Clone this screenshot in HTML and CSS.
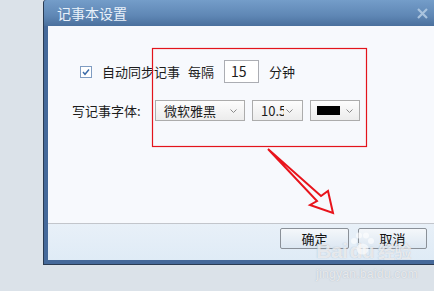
FILE: index.html
```html
<!DOCTYPE html>
<html lang="zh-CN">
	<head>
		<meta charset="UTF-8" />
		<title>记事本设置</title>
		<link rel="stylesheet" href="styles.css">
	</head>
	<body>
		<div class="dialog">
			<div class="titlebar">
				<span class="title">记事本设置</span>
				<svg class="close" width="11" height="11" viewBox="0 0 11 11">
					<path d="M1 1 L10 10 M10 1 L1 10" stroke="#a9c3de" stroke-width="2.2" />
				</svg>
			</div>
			<div class="panel">
				<div class="main">
					<div class="row row-sync">
						<span class="check">
							<svg width="12" height="12" viewBox="0 0 12 12">
								<rect x="0.5" y="0.5" width="11" height="11" fill="#fff" stroke="#7f9cc2" />
								<path d="M3 6 L5 8.3 L9 3.5" fill="none" stroke="#3a6aa8" stroke-width="1.4" />
							</svg>
						</span>
						<span class="sync-label">自动同步记事</span>
						<span class="every">每隔</span>
						<span class="num">15</span>
						<span class="unit">分钟</span>
					</div>
					<div class="row row-font">
						<span class="font-label">写记事字体:</span>
						<div class="select sel-font">
							<span class="val">微软雅黑</span>
							<svg class="chev" width="7" height="4" viewBox="0 0 7 4"><polyline points="0.5,0.5 3.5,3.5 6.5,0.5" fill="none" stroke="#8a8a8a" /></svg>
						</div>
						<div class="select sel-size">
							<span class="val">10.5</span>
							<svg class="chev" width="7" height="4" viewBox="0 0 7 4"><polyline points="0.5,0.5 3.5,3.5 6.5,0.5" fill="none" stroke="#8a8a8a" /></svg>
						</div>
						<div class="select sel-color">
							<span class="swatch"></span>
							<svg class="chev" width="7" height="4" viewBox="0 0 7 4"><polyline points="0.5,0.5 3.5,3.5 6.5,0.5" fill="none" stroke="#8a8a8a" /></svg>
						</div>
					</div>
				</div>
				<div class="footer">
					<button class="btn">确定</button>
					<button class="btn">取消</button>
				</div>
			</div>
		</div>

		<!-- red annotation marks drawn over the screenshot -->
		<svg class="marks" width="434" height="291" viewBox="0 0 434 291">
			<rect x="152.5" y="48.5" width="214" height="98" fill="none" stroke="#e3141c" stroke-width="1.2" />
			<polygon points="268,149 321,196 328,191 333,213 310,205 317,201" fill="none" stroke="#e8141c" stroke-width="2" stroke-linejoin="miter" />
		</svg>

		<div class="watermark">
			<svg class="paw" width="26" height="24" viewBox="0 0 26 24">
				<circle cx="5" cy="9" r="3" />
				<circle cx="10" cy="3.5" r="3" />
				<circle cx="17" cy="3.5" r="3" />
				<circle cx="22" cy="9" r="3" />
				<ellipse cx="13.5" cy="17" rx="6" ry="5.5" />
			</svg>
			<div class="wm-logo">Bai<span class="du">du</span><span class="jy">经验</span></div>
			<div class="wm-url">jingyan.baidu.com</div>
		</div>
	</body>
</html>
```

FILE: styles.css
```css
body {
	margin: 0;
	width: 434px;
	height: 291px;
	overflow: hidden;
	background: #dbe2e9;
	font-family: "Noto Sans CJK SC", "Noto Sans", sans-serif;
	font-size: 13px;
	color: #1c1c1c;
	position: relative;
}

.dialog {
	margin-left: 43px;
	width: 400px;
	border-left: 1px solid #2a3b52;
	border-bottom: 1px solid #2a3b52;
	border-top-left-radius: 3px;
	background: #45699a;
}

.titlebar {
	height: 26px;
	display: flex;
	align-items: center;
	justify-content: space-between;
	padding: 0 16px 0 13px;
	background: linear-gradient(#749dc9, #5f87b5 60%, #4a709d);
	border-top-left-radius: 3px;
}

.title {
	color: #e9f1fa;
	font-size: 14px;
	line-height: 1;
}

.close {
	display: block;
}

.panel {
	margin: 0 4px 4px 4px;
	background: #f7f9fd;
}

.main {
	height: 197px;
	padding-top: 34px;
	box-sizing: border-box;
}

.row {
	display: flex;
	align-items: center;
}

.row-sync {
	height: 23px;
	padding-left: 32px;
}

.check {
	display: flex;
	margin-right: 10px;
}

.every {
	margin-left: 8px;
}

.num {
	margin-left: 10px;
	width: 35px;
	height: 23px;
	box-sizing: border-box;
	border: 1px solid #abadb3;
	background: #fff;
	padding-left: 6px;
	line-height: 21px;
	font-size: 14px;
}

.unit {
	margin-left: 10px;
}

.row-font {
	margin-top: 17px;
	padding-left: 24px;
}

.font-label {
	width: 83px;
}

.select {
	height: 21px;
	box-sizing: border-box;
	border: 1px solid #acacac;
	background: linear-gradient(#fdfdfd, #ececec);
	display: flex;
	align-items: center;
	margin-right: 7px;
}

.sel-font {
	width: 90px;
	padding: 0 7px 0 8px;
	justify-content: space-between;
}

.sel-size {
	width: 51px;
	padding-left: 8px;
}

.sel-size .val {
	width: 23px;
	overflow: hidden;
	white-space: nowrap;
	margin-right: 2px;
}

.sel-color {
	width: 50px;
	padding-left: 6px;
}

.swatch {
	width: 23px;
	height: 9px;
	background: #000;
	margin-right: 6px;
}

.chev {
	display: block;
}

.footer {
	height: 32px;
	border-top: 1px solid #c2c5cb;
	background: linear-gradient(#e8f0f8, #dfebf6);
	display: flex;
	justify-content: flex-end;
	align-items: flex-start;
	gap: 9px;
	padding: 4px 13px 0 0;
	box-sizing: content-box;
}

.btn {
	width: 69px;
	height: 21px;
	padding: 0;
	border: 1px solid #8a9098;
	border-radius: 2px;
	background: linear-gradient(#f4f7fa, #dce7f2);
	font-family: inherit;
	font-size: 13px;
	color: #111;
	line-height: 19px;
}

.marks {
	position: absolute;
	left: 0;
	top: 0;
	pointer-events: none;
}

.watermark {
	position: absolute;
	left: 316px;
	top: 240px;
	color: rgba(255, 255, 255, 0.7);
	text-shadow: 0 0 1px rgba(120, 130, 145, 0.5);
	pointer-events: none;
}

.paw {
	position: absolute;
	left: 33px;
	top: -8px;
	fill: rgba(255, 255, 255, 0.6);
}

.wm-logo {
	font-family: "Liberation Sans", sans-serif;
	font-weight: bold;
	font-size: 21px;
	line-height: 22px;
	letter-spacing: -0.5px;
}

.wm-logo .du {
	margin-left: 2px;
}

.wm-logo .jy {
	font-family: "Noto Sans CJK SC", sans-serif;
	font-size: 17px;
	margin-left: 4px;
}

.wm-url {
	margin-top: 5px;
	font-family: "Liberation Sans", sans-serif;
	font-size: 12px;
	line-height: 14px;
	letter-spacing: 0.3px;
}
```
